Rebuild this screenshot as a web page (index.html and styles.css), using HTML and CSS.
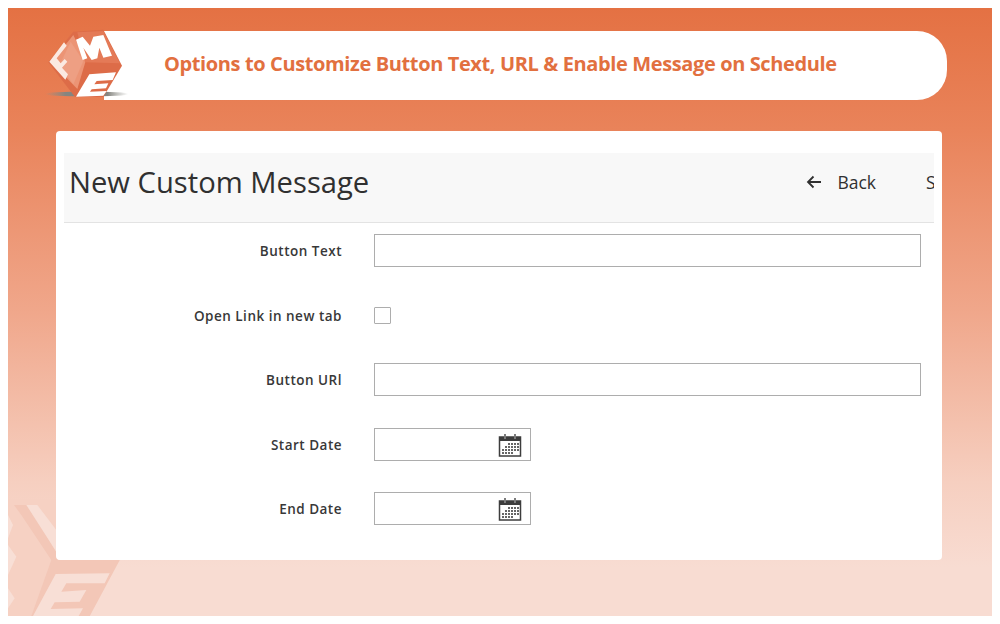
FILE: index.html
```html
<!DOCTYPE html>
<html lang="en">
<head>
<meta charset="utf-8">
<title>New Custom Message</title>
<link rel="stylesheet" href="styles.css">
</head>
<body>
<main class="stage">
  <svg class="watermark" width="120" height="125" viewBox="0 0 360 375" aria-hidden="true">
    <path d="M0 12H150V195H335L245 363H0Z" fill="#f6d1c3"/>
    <path d="M18 30H60L150 180V195H335L245 363H70L130 195L60 90L40 60Z" fill="#f3c7b7"/>
    <path d="M55 30H88L145 105V170Z" fill="#f8dfd6"/>
    <path d="M0 60L15 90L0 130ZM0 150L25 185L0 240ZM0 280L20 310L0 340Z" fill="#f8dfd6"/>
    <path d="M143 237L305 235L290 265L175 265L160 290L235 285L215 320L140 322L128 342L225 340L212 363H75Z" fill="#f8dfd6"/>
  </svg>
  <header class="banner">
    <svg class="logo" width="95" height="80" viewBox="0 0 285 240" aria-hidden="true">
      <defs>
        <linearGradient id="shadow" x1="0" x2="1" y1="0" y2="0">
          <stop offset="0" stop-color="#8f8f88" stop-opacity="0"/>
          <stop offset=".25" stop-color="#858580"/>
          <stop offset=".75" stop-color="#858580"/>
          <stop offset="1" stop-color="#9a9a94" stop-opacity="0"/>
        </linearGradient>
      </defs>
      <ellipse cx="140" cy="207" rx="125" ry="7" fill="url(#shadow)"/>
      <path d="M100 20L190 14L246 122L190 216L105 216L25 112Z" fill="#dd6c48"/>
      <path d="M100 30L137 108L112 192L34 112Z" fill="#ec9475"/>
      <path d="M92 50L130 108L100 178L58 122Z" fill="#ee9f83"/>
      <path d="M112 22L190 18L240 115L135 112Z" fill="#e47a57"/>
      <path d="M72 52L80 62L50 100L62 115L74 102L82 110L66 128L84 148L76 164L28 110Z" fill="#fbe9e1"/>
      <path d="M108 44L128 35L150 62L160 35L190 30L216 92L190 98L178 68L172 100L155 105L130 68L142 100L128 105Z" fill="#fff"/>
      <path d="M148 148L228 142L218 165L170 168L163 178L205 175L198 190L155 193L150 200L200 198L190 212L108 215Z" fill="#fff"/>
    </svg>
    <h2 class="banner-title">Options to Customize Button Text, URL &amp; Enable Message on Schedule</h2>
  </header>
  <section class="card">
    <div class="page-head">
      <h1 class="page-title">New Custom Message</h1>
      <div class="actions">
        <svg class="back-icon" width="16" height="14" viewBox="0 0 16 14" aria-hidden="true"><path d="M15 7H2M7.500 1.500L2 7l5.500 5.500" fill="none" stroke="#303030" stroke-width="1.800"/></svg>
        <span class="back">Back</span>
        <span class="save">S</span>
      </div>
    </div>
    <form class="form">
      <div class="row"><label class="label">Button Text</label><input class="input" type="text"></div>
      <div class="row row-tight"><label class="label">Open Link in new tab</label><span class="check"></span></div>
      <div class="row"><label class="label">Button URl</label><input class="input" type="text"></div>
      <div class="row row-tight"><label class="label">Start Date</label>
        <div class="date"><svg class="cal" width="24" height="24" viewBox="0 0 24 24" aria-hidden="true"><use href="#cal"/></svg></div></div>
      <div class="row"><label class="label">End Date</label>
        <div class="date"><svg class="cal" width="24" height="24" viewBox="0 0 24 24" aria-hidden="true"><use href="#cal"/></svg></div></div>
    </form>
  </section>
</main>
<svg width="0" height="0" class="defs" aria-hidden="true">
  <symbol id="cal" viewBox="0 0 24 24">
    <rect x="1.500" y="4" width="21" height="19" fill="#fff" stroke="#3d3d3d" stroke-width="1.500"/>
    <rect x="1.500" y="4" width="21" height="4" fill="#3d3d3d"/>
    <path d="M7 1v5M17 1v5" stroke="#7d7d7d" stroke-width="2"/>
    <path d="M10 11h2M13 11h2M16 11h2M19 11h2M7 14h2M10 14h2M13 14h2M16 14h2M19 14h2M4 17h2M7 17h2M10 17h2M13 17h2M16 17h2M19 17h2M4 20h2M7 20h2M10 20h2M13 20h2" stroke="#666" stroke-width="2"/>
  </symbol>
</svg>
</body>
</html>
```
FILE: styles.css
```css
* { box-sizing: border-box; }
html, body { margin: 0; background: #fff; }
body { padding: 8px; font-family: "Open Sans", sans-serif; color: #303030; overflow: hidden; }
.defs { position: absolute; }
.stage {
  position: relative;
  height: 608px;
  overflow: hidden;
  padding: 23px 45px 0 48px;
  background: linear-gradient(180deg, #e47143 0%, #e9835a 20%, #f0a78b 50%, #f6cfc0 78%, #f8dcd2 92%, #f8dcd2 100%);
}
.watermark { position: absolute; left: 0; top: 487px; }
.banner {
  position: relative;
  height: 69px;
  margin-left: 48px;
  padding-left: 60px;
  padding-bottom: 5px;
  display: flex;
  align-items: center;
  background: #fff;
  border-radius: 0 30px 30px 0;
}
.logo { position: absolute; left: -64px; top: -6px; }
.banner-title {
  margin: 0;
  font-size: 20px;
  font-weight: 700;
  letter-spacing: -0.38px;
  color: #e2703f;
  white-space: nowrap;
}
.card {
  position: relative;
  height: 429px;
  width: 886px;
  margin-top: 31px;
  padding: 22px 8px 0;
  background: #fff;
  border-radius: 4px;
}
.page-head {
  height: 70px;
  display: flex;
  align-items: center;
  justify-content: space-between;
  background: #f8f8f8;
  border-bottom: 1px solid #e3e3e3;
  overflow: hidden;
  padding: 0 0 12px 5px;
}
.page-title { margin: 0; font-size: 29.200px; font-weight: 400; color: #303030; white-space: nowrap; }
.actions { display: flex; align-items: center; font-size: 17.500px; font-weight: 500; color: #303030; }
.back-icon { margin-right: 15px; }
.save { margin-left: 50px; width: 8px; overflow: hidden; }
.form { padding-top: 11px; }
.row { display: flex; align-items: center; height: 33px; margin-bottom: 32px; }
.row-tight { margin-bottom: 31px; }
.label {
  width: 278px;
  margin-right: 32px;
  text-align: right;
  font-size: 13.500px;
  font-weight: 600;
  letter-spacing: .5px;
  color: #383838;
}
.input {
  width: 547px;
  height: 33px;
  border: 1px solid #adadad;
  background: #fff;
  border-radius: 0;
  padding: 0;
  margin: 0;
  display: block;
}
.check { width: 17px; height: 17px; border: 1px solid #adadad; background: #fff; border-radius: 1px; }
.date {
  width: 157px;
  height: 33px;
  border: 1px solid #adadad;
  background: #fff;
  display: flex;
  align-items: center;
  justify-content: flex-end;
  padding-right: 8px;
}
```
